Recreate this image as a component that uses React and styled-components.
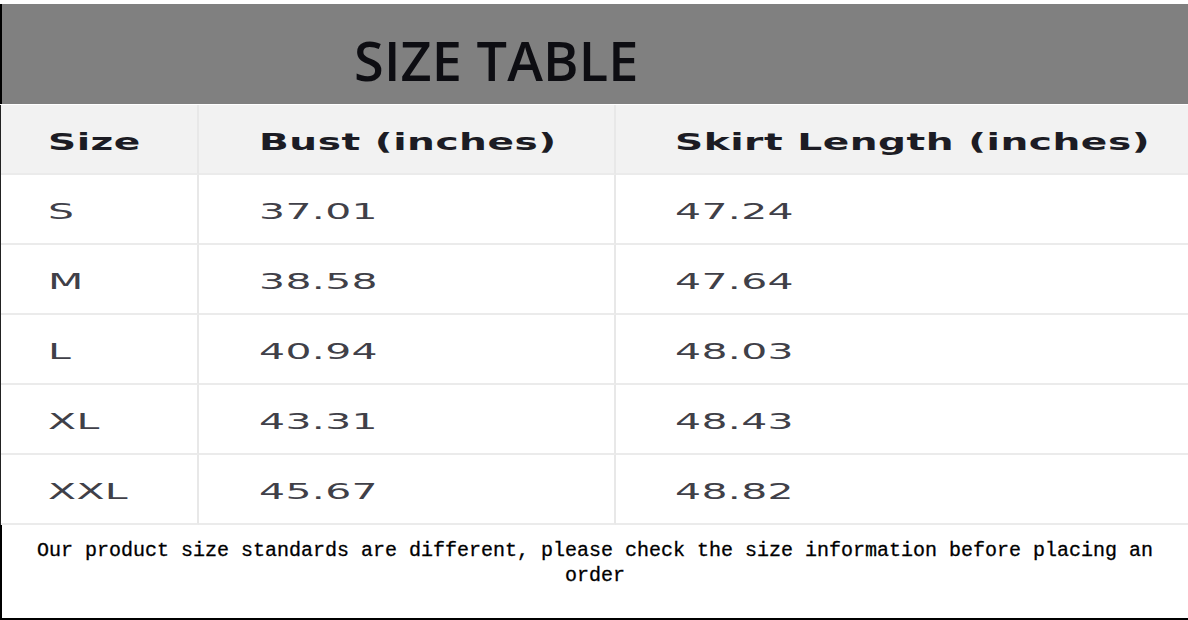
import styled, { createGlobalStyle } from 'styled-components'

const GlobalStyle = createGlobalStyle`
  html, body {
    margin: 0;
    padding: 0;
    background: #fff;
  }
  body {
    width: 1188px;
    height: 620px;
    overflow: hidden;
  }
`

const Page = styled.div`
  width: 1188px;
  height: 620px;
  padding-top: 4px;
  box-sizing: border-box;
  display: flex;
  flex-direction: column;
  background: #fff;
`

const Banner = styled.div`
  height: 100px;
  background: #808080;
  border-left: 2px solid #000;
  display: flex;
  align-items: center;
  padding-left: 352px;
  h1 {
    margin: 0;
    padding-top: 12px;
    font-family: 'Open Sans', sans-serif;
    font-weight: 600;
    font-size: 54px;
    color: #0d0d12;
    letter-spacing: 0.2px;
  }
`

const Grid = styled.div`
  display: grid;
  grid-template-columns: 198px 417px 1fr;
  border-left: 1px solid #222;
  margin-top: 1px;
`

const Cell = styled.div`
  height: 70px;
  box-sizing: border-box;
  display: flex;
  align-items: center;
  padding-top: 5px;
  padding-left: ${(p) => p.$pad}px;
  background: ${(p) => (p.$head ? '#f2f2f2' : '#fff')};
  border-bottom: 2px solid #ebebeb;
  border-right: ${(p) => (p.$last ? 'none' : '2px solid #e8e8e8')};
`

const Label = styled.span`
  display: inline-block;
  font-family: 'DejaVu Sans', sans-serif;
  font-weight: ${(p) => (p.$head ? 700 : 400)};
  font-size: ${(p) => (p.$head ? 23 : 22)}px;
  letter-spacing: ${(p) => (p.$head ? 0.3 : 0.2)}px;
  color: ${(p) => (p.$head ? '#1c1c24' : '#404048')};
  transform: scaleX(${(p) => (p.$head ? 1.7 : 1.86)});
  transform-origin: left center;
  white-space: nowrap;
`

const Note = styled.div`
  flex: 1;
  border-left: 2px solid #000;
  border-bottom: 2px solid #000;
  padding: 13px 16px 0;
  text-align: center;
  font-family: 'Liberation Mono', monospace;
  font-size: 20px;
  line-height: 25px;
  color: #000;
  -webkit-text-stroke: 0.3px #000;
`

const header = ['Size', 'Bust (inches)', 'Skirt Length (inches)']
const rows = [
  ['S', '37.01', '47.24'],
  ['M', '38.58', '47.64'],
  ['L', '40.94', '48.03'],
  ['XL', '43.31', '48.43'],
  ['XXL', '45.67', '48.82'],
]
const pads = [47, 60, 59]

export default function App() {
  return (
    <Page>
      <GlobalStyle />
      <Banner>
        <h1>SIZE TABLE</h1>
      </Banner>
      <Grid>
        {header.map((h, i) => (
          <Cell key={h} $head $pad={pads[i]} $last={i === 2}>
            <Label $head>{h}</Label>
          </Cell>
        ))}
        {rows.map((r) =>
          r.map((v, i) => (
            <Cell key={r[0] + i} $pad={pads[i]} $last={i === 2}>
              <Label>{v}</Label>
            </Cell>
          ))
        )}
      </Grid>
      <Note>
        Our product size standards are different, please check the size information before placing an order
      </Note>
    </Page>
  )
}
